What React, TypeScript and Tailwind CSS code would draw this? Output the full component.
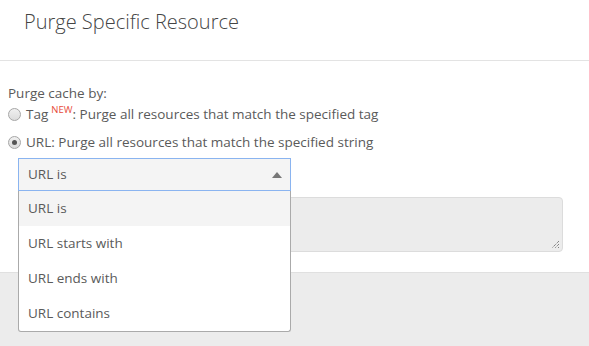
import React from "react";

function Radio({ checked }: { checked?: boolean }) {
  return (
    <span className="relative inline-block w-[13px] h-[13px] rounded-full border border-[#a6a6a6] bg-gradient-to-b from-[#f0f0f0] to-[#dcdcdc] mr-[5px] shrink-0">
      {checked && (
        <span className="absolute left-[3px] top-[3px] w-[5px] h-[5px] rounded-full bg-[#555]" />
      )}
    </span>
  );
}

export default function App() {
  const items = ["URL is", "URL starts with", "URL ends with", "URL contains"];
  return (
    <div className="w-[589px] h-[346px] bg-white overflow-hidden flex flex-col text-[#5a5a5a] text-[13.5px]" style={{ fontFamily: '"Open Sans", sans-serif' }}>
      <div className="h-[61px] border-b border-[#e3e3e3] pl-[24px] pt-[9px]">
        <div className="text-[20px] font-light text-[#444] leading-[26px]">Purge Specific Resource</div>
      </div>
      <div className="flex-1 px-[8px] pt-[23px] relative">
        <div className="leading-[18px]">Purge cache by:</div>
        <div className="flex items-center h-[22px] mt-[1px]">
          <Radio />
          <span>Tag</span>
          <sup className="text-[#e74c3c] text-[9.5px] ml-[3px] top-[-4px] relative">NEW</sup>
          <span>: Purge all resources that match the specified tag</span>
        </div>
        <div className="flex items-center h-[22px] mt-[6px]">
          <Radio checked />
          <span>URL: Purge all resources that match the specified string</span>
        </div>
        <div className="ml-[10px] mt-[5px] w-[273px] h-[33px] border border-[#8ab4f0] bg-[#f4f4f4] flex items-center justify-between pl-[9px] pr-[8px] relative z-10">
          <span>URL is</span>
          <svg width="10" height="6" viewBox="0 0 10 6"><path d="M0 6 L5 0 L10 6 Z" fill="#777" /></svg>
        </div>
        <div className="ml-[10px] mt-[6px] w-[545px] h-[55px] rounded-[4px] border border-[#dcdcdc] bg-[#ececec] relative">
          <svg className="absolute right-[2px] bottom-[2px]" width="9" height="9" viewBox="0 0 9 9">
            <path d="M8 1 L1 8 M8 4 L4 8 M8 7 L7 8" stroke="#555" strokeWidth="1" strokeDasharray="1 1" />
          </svg>
        </div>
        <div className="absolute left-[18px] top-[130px] w-[273px] bg-white border border-[#aaa] border-t-0 rounded-b-[3px] z-20">
          {items.map((t, i) => (
            <div key={t} className={`h-[35px] flex items-center pl-[9px] ${i === 0 ? "bg-[#f4f4f4]" : ""}`}>{t}</div>
          ))}
        </div>
      </div>
      <div className="h-[74px] bg-[#ececec] border-t border-[#e0e0e0]" />
    </div>
  );
}
